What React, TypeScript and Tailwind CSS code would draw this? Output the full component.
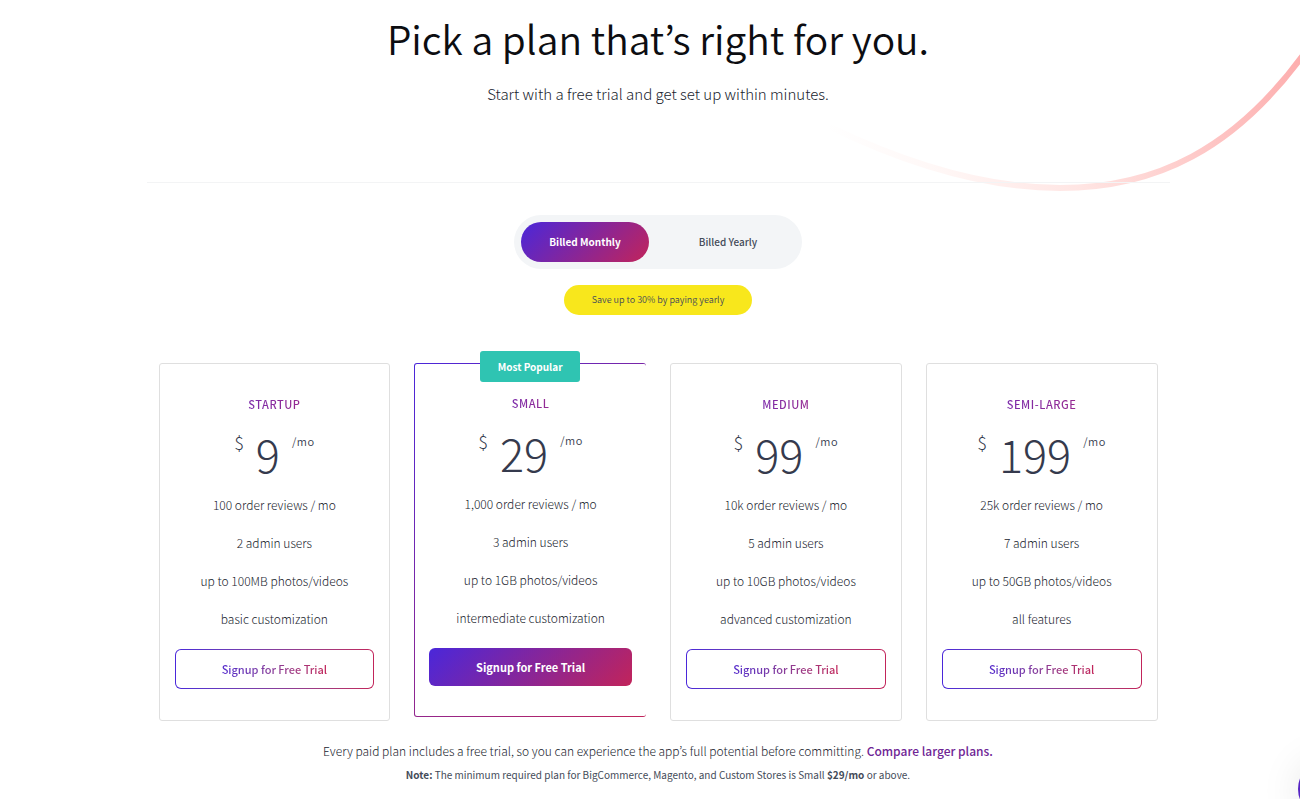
import React, { useState } from 'react';

const PLANS = [
    { name: 'Startup', price: '9', features: ['100 order reviews / mo', '2 admin users', 'up to 100MB photos/videos', 'basic customization'] },
    { name: 'Small', price: '29', popular: true, features: ['1,000 order reviews / mo', '3 admin users', 'up to 1GB photos/videos', 'intermediate customization'] },
    { name: 'Medium', price: '99', features: ['10k order reviews / mo', '5 admin users', 'up to 10GB photos/videos', 'advanced customization'] },
    { name: 'Semi-Large', price: '199', features: ['25k order reviews / mo', '7 admin users', 'up to 50GB photos/videos', 'all features'] },
];

type Plan = (typeof PLANS)[number];

function Swoosh() {
    return (
        <svg className="absolute top-0 right-0 -z-10" width="480" height="200" viewBox="820 0 480 200" fill="none" aria-hidden="true">
            <defs>
                <linearGradient id="swoosh" gradientUnits="userSpaceOnUse" x1="830" y1="150" x2="1300" y2="60">
                    <stop offset="0" stopColor="#fff" />
                    <stop offset="0.2" stopColor="#fff8f7" />
                    <stop offset="0.5" stopColor="#ffe5e3" />
                    <stop offset="1" stopColor="#fdaeae" />
                </linearGradient>
            </defs>
            <path d="M830 127C905 163 985 188 1060 188C1155 188 1235 150 1306 51" stroke="url(#swoosh)" strokeWidth="6" />
        </svg>
    );
}

function BillingToggle() {
    const [billing, setBilling] = useState('Monthly');

    return (
        <div className="flex w-72 gap-3 rounded-full bg-[#f3f5f7] p-[7px]">
            {['Monthly', 'Yearly'].map((period) => (
                <button
                    key={period}
                    type="button"
                    aria-pressed={billing === period}
                    onClick={() => setBilling(period)}
                    className={
                        billing === period
                            ? 'h-10 w-32 rounded-full bg-linear-[135deg,#4a27da,#c2245a] pb-0.5 text-[10px] font-bold text-white'
                            : 'h-10 grow rounded-full pb-0.5 text-[10px] font-medium text-[#444b59]'
                    }
                >
                    Billed {period}
                </button>
            ))}
        </div>
    );
}

function PlanCard({ plan }: { plan: Plan }) {
    return (
        <section
            className={
                plan.popular
                    ? 'relative rounded-[3px] bg-linear-[135deg,#4a27da,#c2245a] py-px pl-px'
                    : 'rounded-[3px] border border-[#dfdfdf]'
            }
        >
            {plan.popular && (
                <span className="absolute -top-3 left-1/2 flex h-[31px] w-[100px] -translate-x-1/2 items-center justify-center rounded-[3px] bg-[#2fc4b2] text-[10px] font-bold text-white">
                    Most Popular
                </span>
            )}
            <div className={plan.popular ? 'rounded-[2px] bg-white px-[14px] pt-[29px] pb-[30px]' : 'px-[15px] pt-[30px] pb-[31px]'}>
                <h2 className="text-center text-[11px] leading-5 font-medium tracking-wider uppercase">
                    <span className="bg-linear-to-r from-[#7c2aaa] to-[#962a92] bg-clip-text text-transparent">{plan.name}</span>
                </h2>
                <p className="mt-3 flex h-[60px] justify-center text-[#353a4d]">
                    <span className="mr-3 text-lg leading-8 font-light">$</span>
                    <span className="text-[45px] leading-[56px] font-extralight">{plan.price}</span>
                    <span className="ml-3 text-[11px] leading-[30px] font-[350] tracking-wider">/mo</span>
                </p>
                <ul className="text-center text-xs leading-[38px] font-light text-[#20242e]">
                    {plan.features.map((feature) => (
                        <li key={feature}>{feature}</li>
                    ))}
                </ul>
                {plan.popular ? (
                    <button type="button" className="mt-[11px] block h-[38px] w-full rounded-md bg-linear-[135deg,#4a27da,#c2245a] text-[11px] font-bold text-white">
                        Signup for Free Trial
                    </button>
                ) : (
                    <button type="button" className="mt-[11px] flex h-10 w-full rounded-md bg-linear-to-r from-[#4a27da] to-[#c2245a] p-px text-[11px] font-medium">
                        <span className="flex h-full w-full items-center justify-center rounded-[5px] bg-white">
                            <span className="bg-linear-to-r from-[#5428cc] to-[#c2245a] bg-clip-text text-transparent">Signup for Free Trial</span>
                        </span>
                    </button>
                )}
            </div>
        </section>
    );
}

export default function App() {
    return (
        <div className="relative isolate min-h-screen overflow-hidden bg-white pl-4 font-['Noto_Sans_CJK_KR',sans-serif] text-[#444b59]">
            <Swoosh />
            <main className="mx-auto max-w-[1023px]">
                <header className="border-b border-[#f3f4f5] pt-[10px] pb-[75px] text-center">
                    <h1 className="text-[39px] leading-[56px] font-[350] text-[#0c0d11]">Pick a plan that’s right for you.</h1>
                    <p className="mt-[15px] text-[15px] leading-[26px] font-light text-[#20242e]">Start with a free trial and get set up within minutes.</p>
                </header>

                <div className="flex flex-col items-center pt-8">
                    <BillingToggle />
                    <p className="mt-4 rounded-full bg-[#f8e71c] px-7 text-[9px] leading-[30px] font-[350]">Save up to 30% by paying yearly</p>
                </div>

                <div className="mt-12 grid grid-cols-4 items-start gap-6 px-3">
                    {PLANS.map((plan) => (
                        <PlanCard key={plan.name} plan={plan} />
                    ))}
                </div>

                <footer className="pt-[19px] text-center">
                    <p className="text-xs leading-[22px] font-light text-[#20242e]">
                        Every paid plan includes a free trial, so you can experience the app’s full potential before committing.{' '}
                        <a href="#larger-plans" className="font-medium text-[#6f2595]">Compare larger plans.</a>
                    </p>
                    <p className="mt-[3px] text-[10px] leading-5">
                        <strong>Note:</strong> The minimum required plan for BigCommerce, Magento, and Custom Stores is Small <strong>$29/mo</strong> or above.
                    </p>
                </footer>
            </main>
            <button type="button" aria-label="Open chat" className="fixed -right-[58px] -bottom-5 size-[60px] rounded-full bg-[#5624c4] shadow-[0_2px_40px_rgba(0,0,0,0.1)]" />
        </div>
    );
}
